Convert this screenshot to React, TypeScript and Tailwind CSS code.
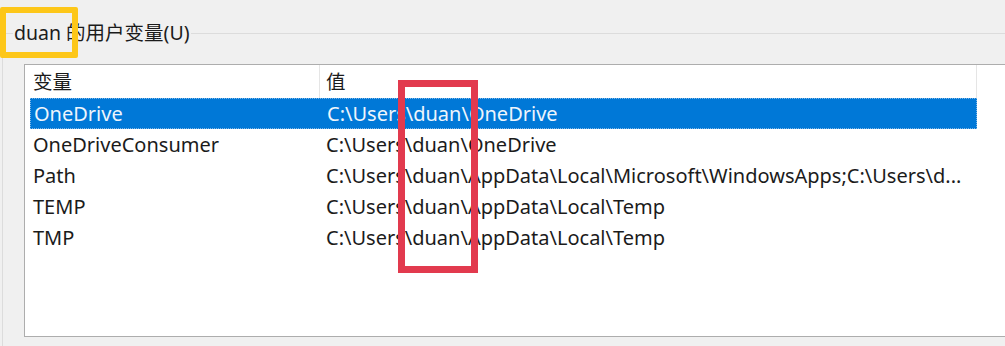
import React from 'react';

type EnvVar = { name: string; value: string };

const vars: EnvVar[] = [
  { name: 'OneDrive', value: 'C:\\Users\\duan\\OneDrive' },
  { name: 'OneDriveConsumer', value: 'C:\\Users\\duan\\OneDrive' },
  { name: 'Path', value: 'C:\\Users\\duan\\AppData\\Local\\Microsoft\\WindowsApps;C:\\Users\\d...' },
  { name: 'TEMP', value: 'C:\\Users\\duan\\AppData\\Local\\Temp' },
  { name: 'TMP', value: 'C:\\Users\\duan\\AppData\\Local\\Temp' },
];

const font = { fontFamily: '"Noto Sans", "Noto Sans CJK SC", sans-serif' };

const App: React.FC = () => {
  return (
    <div
      className="relative w-[1005px] h-[346px] overflow-hidden bg-[#f0f0f0] text-[#1b1b1b] pt-[33px]"
      style={font}
    >
      {/* group box */}
      <div className="ml-[2px] border-t border-l border-[#dcdcdc] h-[320px]">
        <div className="-mt-[14px] ml-[10px] w-fit px-[1px] bg-[#f0f0f0] text-[19.5px] leading-[26px]">
          duan 的用户变量(U)
        </div>

        <div className="mt-[18px] ml-[21px] w-[1000px] h-[273px] border border-[#adadad] bg-white">
          {/* header */}
          <div className="flex h-[33px] text-[19.5px]">
            <div className="w-[295px] pl-[8px] flex items-center border-r border-[#e5e5e5]">变量</div>
            <div className="w-[657px] pl-[6px] flex items-center border-r border-[#e5e5e5]">值</div>
          </div>

          {/* rows */}
          <div className="ml-[5px] w-[947px]">
            {vars.map((v, i) => (
              <div
                key={v.name}
                className={`flex h-[31px] items-center text-[20px] whitespace-nowrap ${
                  i === 0 ? 'bg-[#0078d7] text-[#eef5fc] border border-dotted border-[#7fb6e6]' : ''
                }`}
              >
                <div className="w-[290px] pl-[3px]">{v.name}</div>
                <div className="flex-1 pl-[6px] overflow-hidden">{v.value}</div>
              </div>
            ))}
          </div>
        </div>
      </div>

      {/* yellow highlight */}
      <div className="absolute left-0 top-[7px] w-[78px] h-[51px] border-[6px] border-[#fdc719] rounded-[2px]" />
      {/* red highlight */}
      <div className="absolute left-[398px] top-[80px] w-[80px] h-[193px] border-[7px] border-[#e23a4e]" />
    </div>
  );
};

export default App;
